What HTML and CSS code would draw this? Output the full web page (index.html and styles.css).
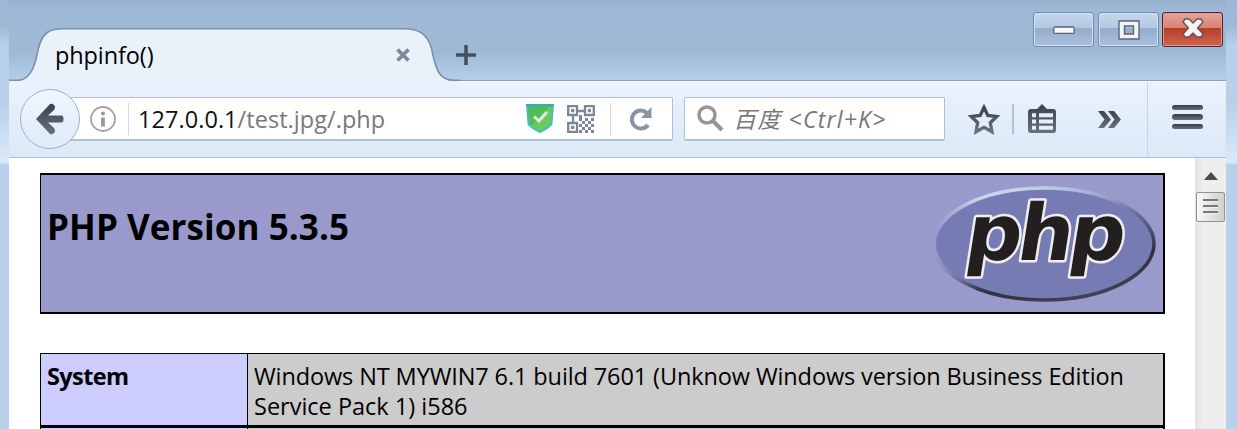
FILE: index.html
```html
<!DOCTYPE html>
<html lang="zh">
<head>
<meta charset="utf-8">
<title>phpinfo()</title>
<link rel="stylesheet" href="styles.css">
</head>
<body>
<div class="window">
  <header class="titlebar">
    <div class="tab">
      <svg class="tab-shape" width="452" height="54" viewBox="0 0 452 54">
        <path d="M0 54V53H8C21 53 25 40 28 27C31 9 37 1 52 1H396C413 1 421 9 424 27C427 42 431 53 445 53H452V54Z" fill="#e9f1fb"/>
        <path d="M0 52.3H8C21 52 25 40 28 27C31 9 37 .8 52 .8H396C413 .8 421 9 424 27C427 42 431 52.3 445 52.300H452" fill="none" stroke="#7891b0" stroke-width="1.6"/>
      </svg>
      <span class="tab-title">phpinfo()</span>
      <svg class="tab-close" width="14" height="14" viewBox="0 0 14 14"><path d="M1.5 1.5L12.5 12.5M12.5 1.5L1.5 12.5" stroke="#7f8b99" stroke-width="3.8"/></svg>
    </div>
    <svg class="new-tab" width="20" height="20" viewBox="0 0 20 20"><path d="M0 10H20M10 0V20" stroke="#46505c" stroke-width="3.6"/></svg>
    <div class="controls">
      <div class="control"><svg width="22" height="20"><rect x=".8" y="7" width="20.4" height="6.4" rx="1" fill="#f6f6f6" stroke="#5a6675" stroke-width="1.3"/></svg></div>
      <div class="control"><svg width="22" height="20"><path d="M1 1H21V19H1ZM6.500 6V14H15.500V6Z" fill="#f4f4f4" fill-rule="evenodd" stroke="#5a6675" stroke-width="1.4"/></svg></div>
      <div class="control close"><svg width="22" height="20" viewBox="0 0 22 20"><path d="M3 1H7L11 5L15 1H19L21 4L15.500 10L21 16L19 19H15L11 15L7 19H3L1 16L6.500 10L1 4Z" fill="#f4f4f4" stroke="#6b5058" stroke-width="1.4" stroke-linejoin="round"/></svg></div>
    </div>
  </header>
  <nav class="toolbar">
    <div class="back"><svg width="28" height="32" viewBox="0 0 28 32"><defs><linearGradient id="ink" x1="0" y1="0" x2="0" y2="1"><stop offset="0" stop-color="#384151"/><stop offset="1" stop-color="#69727d"/></linearGradient></defs><path d="M0 16L14 1Q16 0 18 2T18 7L12 12.500H25.500Q27.500 12.500 27.500 16T25.500 19.500H12L18 25Q20 28 18 30T14 31Z" fill="url(#ink)"/></svg></div>
    <div class="urlbar">
      <svg class="info" width="26" height="26" viewBox="0 0 26 26"><circle cx="13" cy="13" r="12" fill="none" stroke="#a3a3a3" stroke-width="1.8"/><circle cx="13" cy="7.500" r="2" fill="#999"/><path d="M13 11.500V20.500" stroke="#999" stroke-width="3.8"/></svg>
      <span class="rule"></span>
      <span class="url"><b>127.0.0.1</b>/test.jpg/.php</span>
      <svg class="shield" width="28" height="29" viewBox="0 0 28 29"><path d="M1 1H27L25.500 20Q24 23 14 28Q4 23 2.500 20Z" fill="#4fbc57" stroke="#43bfcc" stroke-width="2"/><path d="M23 3L5 22L14 27Q23 22 24.500 19L26 3Z" fill="#72cd61" opacity=".8"/><path d="M0 1.200H28" stroke="#32abb1" stroke-width="2"/><path d="M8 12.500L13 17L21 8" fill="none" stroke="#e6e6e6" stroke-width="3"/></svg>
      <svg class="qr" width="28" height="28" viewBox="0 0 28 28" fill="none" stroke="#7c8696" stroke-width="2.300"><path d="M1.200 1.200H10V10H1.200ZM18 1.200H26.800V10H18ZM1.200 18H10V26.800H1.200ZM10 6H18M6 10V18"/><path d="M4 4H7.300V7.300H4ZM20.800 4H24V7.300H20.800ZM4 20.800H7.300V24H4Z" fill="#7c8696" stroke="none"/><path d="M12 14.500H15M18 14.500H21M24 14.500H27M15 17.500H18M21 17.500H24M12 20.500H15M18 20.500H21M24 20.500H27M15 23.500H18M21 23.500H24M12 26.500H15M18 26.500H21M24 26.500H27M12 11.500H15" stroke-width="3"/></svg>
      <span class="rule"></span>
      <svg class="reload" width="23" height="24" viewBox="0 0 23 24"><path d="M17 6A9 9 0 1 0 18 18" fill="none" stroke="#8995a3" stroke-width="4"/><path d="M21.500 0V11H11Z" fill="#8995a3"/></svg>
    </div>
    <div class="search">
      <svg width="27" height="27" viewBox="0 0 27 27" fill="none" stroke="#969696"><circle cx="10" cy="10" r="8" stroke-width="3.500"/><path d="M16 16L25 25" stroke-width="4.200"/></svg>
      <span class="search-hint"><i>百度</i> &lt;Ctrl+K&gt;</span>
    </div>
    <svg class="star" width="32" height="31" viewBox="0 0 32 31"><path d="M16 3.500L19.800 11.500L28.800 12.600L22.300 18.700L24 27.800L16 23.400L8 27.800L9.700 18.700L3.200 12.600L12.200 11.500Z" fill="none" stroke="url(#ink)" stroke-width="3.300"/></svg>
    <span class="tool-rule"></span>
    <svg class="clip" width="28" height="30" viewBox="0 0 28 30"><path d="M9 5L14 0L19 5H25Q28 5 28 8V26Q28 29 25 29H3Q0 29 0 26V8Q0 5 3 5Z" fill="url(#ink)"/><path d="M4 11.200H8M4 17.500H8M4 23.800H8M11 11.200H25M11 17.500H25M11 23.800H25" stroke="#e4eef9" stroke-width="4"/></svg>
    <svg class="chevrons" width="23" height="17" viewBox="0 0 23 17"><path d="M0 0H6L13 8.500L6 17H0L6.500 8.500ZM10 0H16L23 8.500L16 17H10L16.500 8.500Z" fill="url(#ink)"/></svg>
    <div class="menu"><span></span><span></span><span></span></div>
  </nav>
  <div class="viewport">
    <main class="page">
      <section class="banner">
        <h1>PHP Version 5.3.5</h1>
        <svg class="logo" width="224" height="120" viewBox="0 0 224 120">
          <defs>
            <linearGradient id="rim" x1=".25" y1="0" x2=".75" y2="1"><stop offset="0" stop-color="#d5e0ef"/><stop offset=".22" stop-color="#a7b0d6"/><stop offset=".42" stop-color="#7074a5"/><stop offset=".75" stop-color="#30303f"/><stop offset="1" stop-color="#45455a"/></linearGradient>
            <linearGradient id="fade" x1="0" y1="0" x2="1" y2="0"><stop offset="0" stop-color="#9999cc"/><stop offset=".2" stop-color="#9999cc" stop-opacity="0"/></linearGradient>
          </defs>
          <ellipse cx="112" cy="60" rx="110" ry="56" fill="#777bb3" stroke="url(#rim)" stroke-width="3.500"/>
          <ellipse cx="112" cy="60" rx="110" ry="56" fill="none" stroke="url(#fade)" stroke-width="4"/>
          <text class="logo-text" transform="translate(31 76) skewX(-9)" x="0" y="0">php</text>
        </svg>
      </section>
      <section class="info-table">
        <div class="key">System</div>
        <div class="value"><span class="first">Windows NT MYWIN7 6.1 build 7601 (Unknow Windows version Business Edition</span><br><span>Service Pack 1) i586</span></div>
        <div class="key"></div><div class="value"></div>
      </section>
    </main>
    <aside class="scrollbar">
      <svg width="14" height="8" viewBox="0 0 14 8"><path d="M0 8L7 0L14 8Z" fill="#4b4b4b"/></svg>
      <div class="thumb"><span></span><span></span><span></span></div>
    </aside>
  </div>
</div>
</body>
</html>
```
FILE: styles.css
```css
* { box-sizing: border-box; }
body { margin: 0; width: 1237px; height: 429px; overflow: hidden; font-family: "Open Sans", "Noto Sans CJK SC", sans-serif; }
svg { display: block; flex: none; }
.window { height: 429px; padding: 0 11px 0 9px; background: linear-gradient(#9db7d4 0, #9fb9d5 25px, #b7cfe9 45px, #b7cfe9 100px, #dbe9f8 162px, #b9d0ea 165px); }
.titlebar { height: 81px; display: flex; background: linear-gradient(#98b1ce 0, #9fb9d6 12px, #9fb9d5 52px, #b5cde8 80px); border-bottom: 1px solid #8aa2bf; }
.tab { display: grid; grid-template-columns: 390px 62px; grid-template-rows: 54px; margin-top: 28px; width: 452px; height: 54px; align-items: center; position: relative; z-index: 1; }
.tab-shape { grid-area: 1 / 1 / 2 / 3; }
.tab-title { grid-area: 1 / 1; padding-left: 46px; font-size: 23.500px; letter-spacing: -.1px; line-height: 30px; }
.tab-close { grid-area: 1 / 2; margin-left: -3px; }
.new-tab { margin: 45px 0 0 -5px; }
.controls { margin: 12px 3px 0 auto; display: flex; gap: 4px; height: 35px; }
.control { width: 61px; display: flex; align-items: center; justify-content: center; border: 1px solid #738caa; border-radius: 3px; box-shadow: inset 0 0 0 1px #d1dff0; background: linear-gradient(#c6d7ec, #b3c9e2 44%, #94acca 46%, #aac2de); }
.control.close { border-color: #51222a; box-shadow: inset 0 0 0 1px #e29b91; background: linear-gradient(#e6a59b, #d78274 44%, #b63d28 46%, #cf654d); margin-left: -1px; }
.close svg { margin-top: -3px; }
.toolbar { height: 77px; padding-bottom: 1px; display: flex; align-items: center; background: linear-gradient(#eaf2fc, #dbe9f7); border-top: 1px solid #f4f9ff; border-bottom: 1px solid #a8c0da; }
.back { width: 60px; height: 60px; margin-left: 11px; display: flex; align-items: center; justify-content: center; border: 1.500px solid #9cb1c8; border-radius: 50%; background: linear-gradient(#eff6fe, #deebf9); z-index: 1; }
.back svg { margin-left: -1px; }
.urlbar { width: 604px; height: 44px; margin-left: -11px; padding: 0 19px 0 20px; display: flex; align-items: center; background: #fff; border: 1px solid #afc0d4; border-bottom: 2px solid #b1c1d4; border-radius: 0 2px 2px 0; }
.rule { width: 1px; height: 32px; background: #d5d8dd; flex: none; }
.info + .rule { margin-left: 12px; }
.url { width: 398px; padding-left: 9px; color: #797979; font-size: 23.500px; line-height: 30px; letter-spacing: .05px; white-space: nowrap; }
.url b { color: #111; font-weight: 400; }
.qr { margin: 0 15px 0 13px; }
.reload { margin-left: 19px; }
.search { width: 261px; height: 44px; margin-left: 11px; padding-left: 12px; display: flex; align-items: center; background: #fff; border: 1px solid #afc0d4; border-bottom: 2px solid #b1c1d4; border-radius: 2px; }
.search-hint { margin-left: 9px; color: #777; font-style: italic; font-size: 23px; line-height: 30px; letter-spacing: 1.200px; white-space: nowrap; }
.search-hint i { font-weight: 400; }
.star { margin-left: 23px; }
.tool-rule { width: 2px; height: 30px; margin-left: 12px; background: #b9c1cb; }
.clip { margin-left: 14px; }
.chevrons { margin-left: 42px; }
.menu { width: 79px; height: 75px; margin-left: auto; padding: 23px 0 0 24px; display: flex; flex-direction: column; gap: 4px; border-left: 1px solid #c5d5e6; }
.menu span { width: 31px; height: 5.500px; border-radius: 3px; background: linear-gradient(#333c4b, #66717e); }
.viewport { height: 271px; display: flex; background: #fff; overflow: hidden; }
.page { flex: 1; padding: 15px 30px 0 31px; }
.banner { height: 141px; width: 1125px; display: flex; justify-content: space-between; background: #9999cc; border: 2px solid #000; border-left-width: 1.500px; }
h1 { margin: 27px 0 0 6px; font-size: 35px; line-height: 50px; letter-spacing: .06px; font-weight: 700; white-space: nowrap; }
.logo { margin: 9px 7px 0 0; }
.logo-text { font-family: "DejaVu Sans", sans-serif; font-size: 78px; font-weight: 700; letter-spacing: -4px; fill: #231f20; stroke: #eee; stroke-width: 5px; paint-order: stroke; stroke-linejoin: round; }
.info-table { width: 1125px; margin-top: 39px; display: grid; grid-template-columns: 206px 1fr; grid-template-rows: 71px 20px; gap: 3px 1px; padding: 1px 2px 1px 1px; background: #000; font-size: 23.500px; line-height: 30px; }
.key { padding: 7px 6px; background: #ccccff; font-weight: 700; letter-spacing: -.6px; }
.value { padding: 7px 6px; background: #cccccc; white-space: nowrap; }
.first { letter-spacing: -.11px; }
.scrollbar { width: 31px; padding-top: 14px; display: flex; flex-direction: column; align-items: center; background: linear-gradient(90deg, #e3e3e3, #eee 8px, #eee); }
.thumb { width: 29px; height: 30px; margin-top: 12px; display: flex; flex-direction: column; gap: 3px; align-items: center; padding-top: 6px; border: 1px solid #929292; border-radius: 2px; background: linear-gradient(90deg, #f8f8f8, #d0d0d0); }
.thumb span { width: 15px; height: 3px; border-top: 2px solid #777; border-bottom: 1px solid #eee; }
```
